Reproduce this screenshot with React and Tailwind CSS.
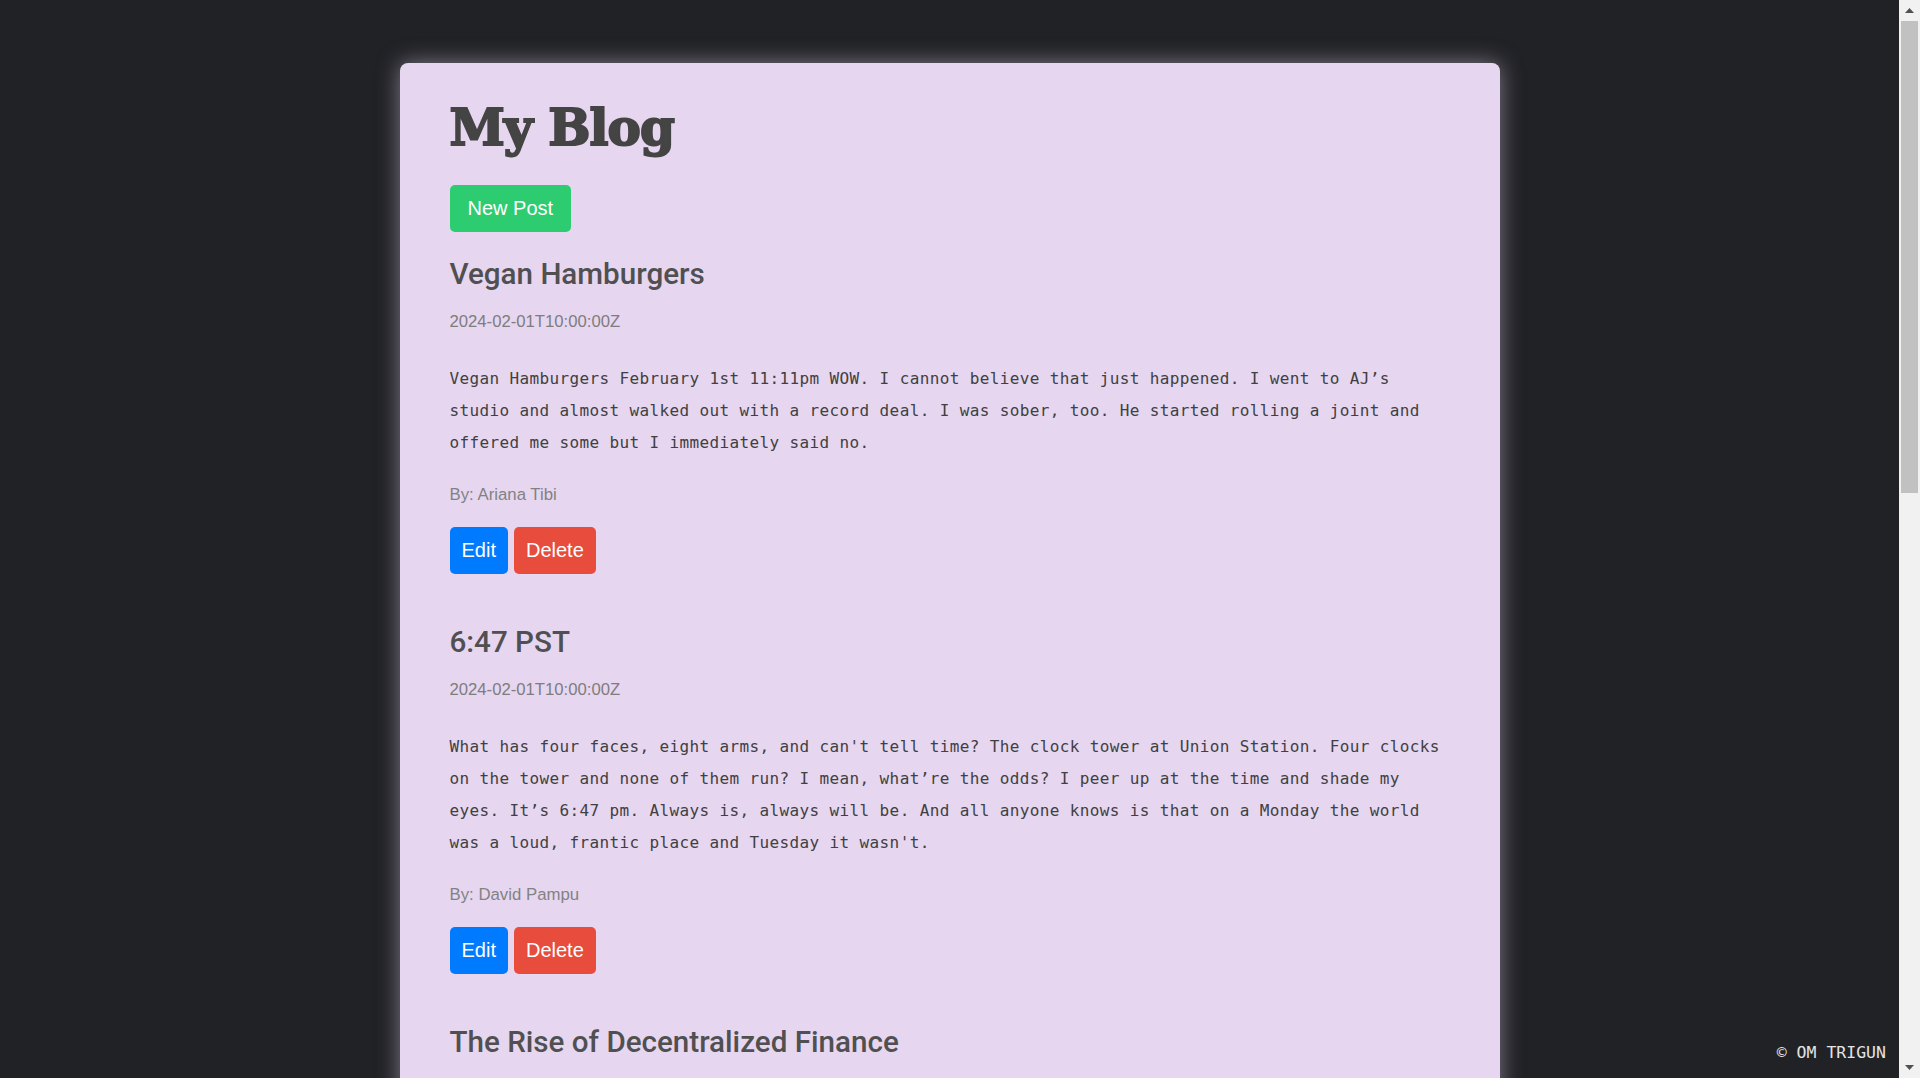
import React from "react";

const posts = [
  {
    title: "Vegan Hamburgers",
    date: "2024-02-01T10:00:00Z",
    body:
      "Vegan Hamburgers February 1st 11:11pm WOW. I cannot believe that just happened. I went to AJ’s studio and almost walked out with a record deal. I was sober, too. He started rolling a joint and offered me some but I immediately said no.",
    author: "Ariana Tibi",
  },
  {
    title: "6:47 PST",
    date: "2024-02-01T10:00:00Z",
    body:
      "What has four faces, eight arms, and can't tell time? The clock tower at Union Station. Four clocks on the tower and none of them run? I mean, what’re the odds? I peer up at the time and shade my eyes. It’s 6:47 pm. Always is, always will be. And all anyone knows is that on a Monday the world was a loud, frantic place and Tuesday it wasn't.",
    author: "David Pampu",
  },
  {
    title: "The Rise of Decentralized Finance",
    date: "2024-02-01T10:00:00Z",
    body:
      "Decentralized Finance (DeFi) is an emerging and rapidly evolving field in the blockchain industry. It refers to the shift from traditional, centralized financial systems to peer-to-peer finance enabled by decentralized technologies built on Ethereum and other blockchains. With the promise of reduced dependency on the traditional banking sector, DeFi platforms offer a wide range of services.",
    author: "Alex Thompson",
  },
  {
    title: "The Impact of Artificial Intelligence on Modern Businesses",
    date: "2024-02-01T10:00:00Z",
    body:
      "Artificial Intelligence (AI) is no longer a concept of the future. It's very much a part of our present, reshaping industries and enhancing the capabilities of existing systems. From automating routine tasks to offering intelligent insights, AI is proving to be a boon for businesses.",
    author: "Mia Williams",
  },
  {
    title: "Sustainable Living: Tips for an Eco-Friendly Lifestyle",
    date: "2024-02-01T10:00:00Z",
    body:
      "Sustainability is more than just a buzzword; it's a way of life. As the effects of climate change become more pronounced, there's a growing realization about the need to live sustainably. From reducing waste to conserving energy, every small step counts.",
    author: "Samuel Green",
  },
];

function Post({ post }) {
  return (
    <div className="mt-[25px]">
      <h2 className="font-['Roboto',sans-serif] text-[29.6px] leading-[34px] font-medium text-[#505050]">
        {post.title}
      </h2>
      <div className="mt-[22px] font-['Liberation_Sans',Arial,sans-serif] text-[16.7px] leading-[18px] text-[#7d7d7d]">
        {post.date}
      </div>
      <p className="mt-[32px] font-['DejaVu_Sans_Mono',monospace] text-[16px] leading-[32px] tracking-[0.37px] text-[#404040]">
        {post.body}
      </p>
      <div className="mt-[27px] font-['Liberation_Sans',Arial,sans-serif] text-[16.8px] leading-[18px] text-[#828282]">
        By: {post.author}
      </div>
      <div className="mt-[23px] flex gap-[6px] font-['Liberation_Sans',Arial,sans-serif]">
        <button className="h-[47px] rounded-[5px] bg-[#007bff] px-[12px] text-[20px] leading-[23px] text-white">
          Edit
        </button>
        <button className="h-[47px] rounded-[5px] bg-[#e74c3c] px-[12px] text-[20px] leading-[23px] text-white">
          Delete
        </button>
      </div>
    </div>
  );
}

function Arrow({ down }) {
  return (
    <div className="flex h-[21px] items-center justify-center">
      <svg width="9" height="5" viewBox="0 0 9 5">
        {down ? (
          <polygon points="0,0 9,0 4.5,5" fill="#505050" />
        ) : (
          <polygon points="4.5,0 9,5 0,5" fill="#505050" />
        )}
      </svg>
    </div>
  );
}

export default function App() {
  return (
    <div className="flex h-screen overflow-hidden bg-[#212226]">
      <div className="relative flex-1 overflow-hidden">
        <div className="pt-[63px] pb-[63px]">
          <div className="mx-auto w-[1100px] rounded-lg bg-[#e7d6f0] px-[50px] pt-[35px] pb-[40px] shadow-[0_0_22px_rgba(225,210,235,0.5)]">
            <h1 className="font-['DejaVu_Serif',serif] text-[50px] leading-[60px] font-bold tracking-[-1px] text-[#444444] [-webkit-text-stroke:2px_#444444]">
              My Blog
            </h1>
            <button className="mt-[27px] h-[47px] rounded-[5px] bg-[#2ecc71] px-[18px] font-['Liberation_Sans',Arial,sans-serif] text-[20px] leading-[23px] text-white">
              New Post
            </button>
            <div className="flex flex-col gap-[26px]">
              {posts.map((p, i) => (
                <Post key={i} post={p} />
              ))}
            </div>
          </div>
        </div>
        <div className="absolute right-[13px] bottom-[12px] font-['DejaVu_Sans_Mono',monospace] text-[16.5px] text-[#e4e4e4]">
          © OM TRIGUN
        </div>
      </div>
      <div className="flex h-screen w-[21px] flex-col bg-[#f1f1f1]">
        <Arrow />
        <div className="mx-[2px] h-[472px] bg-[#c1c1c1]" />
        <div className="flex-1" />
        <Arrow down />
      </div>
    </div>
  );
}
